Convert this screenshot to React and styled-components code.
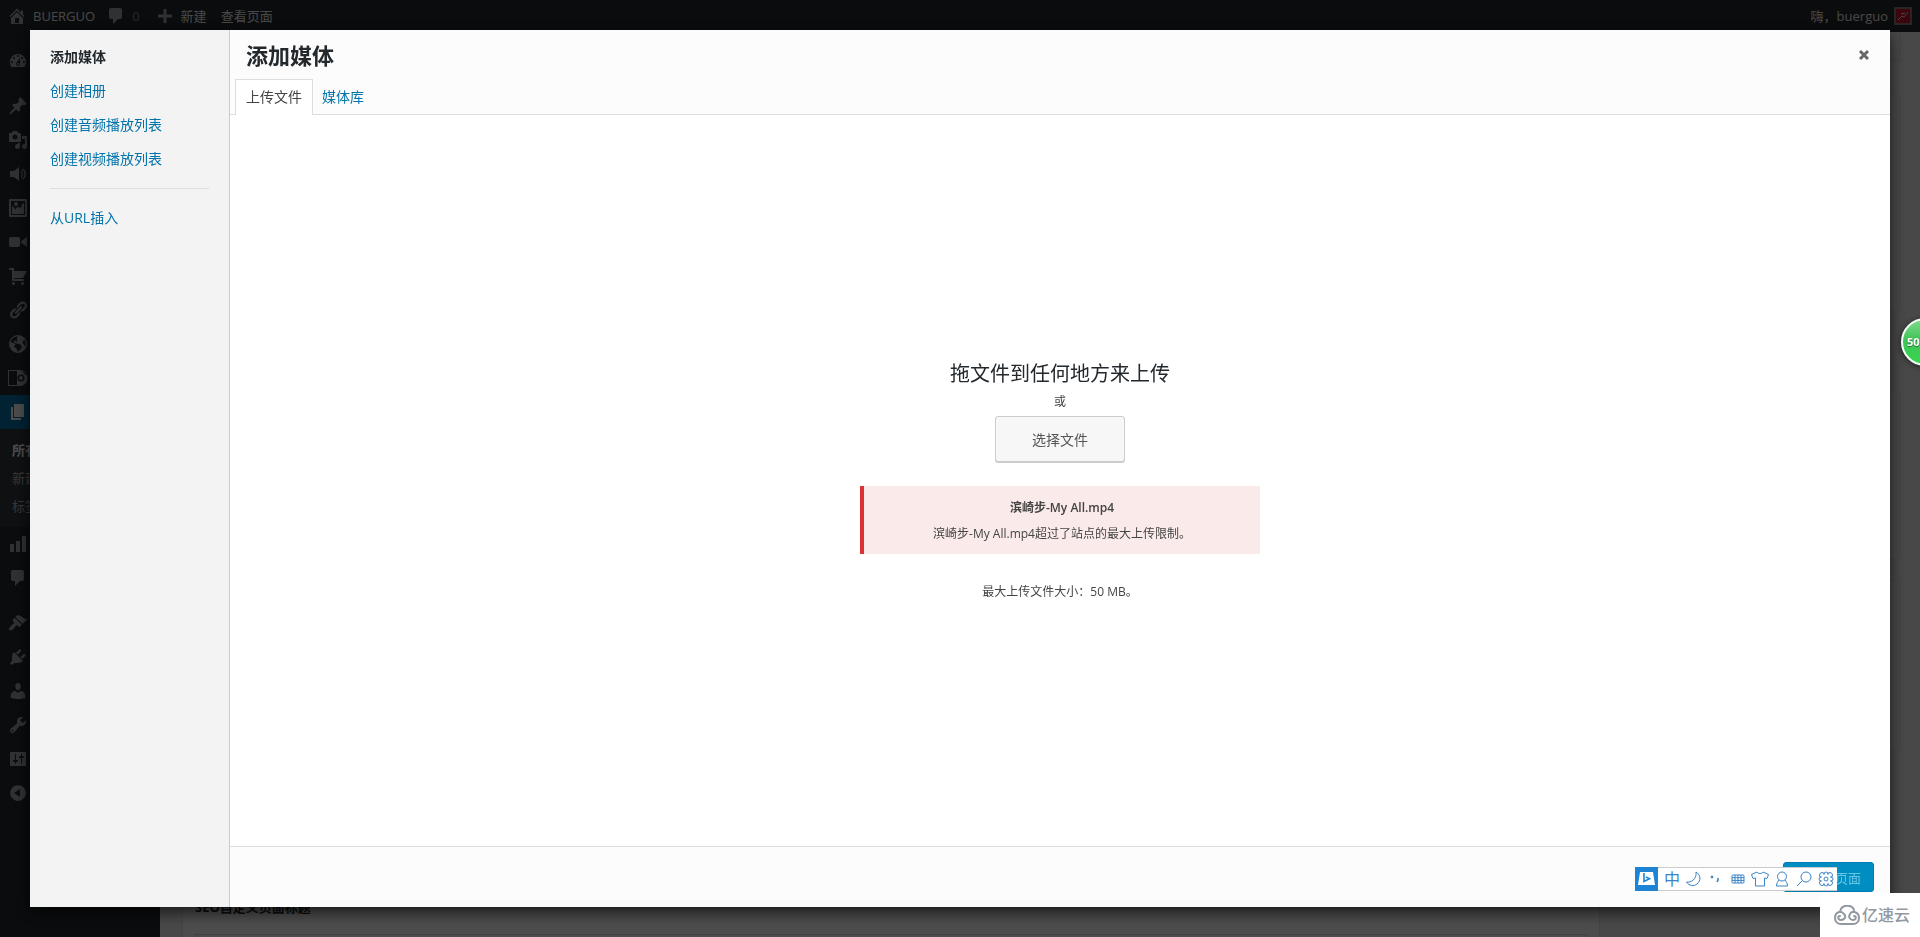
import styled, { createGlobalStyle } from "styled-components"

const icons = {
    home: "M16 8.5l1.53 1.53-1.06 1.06L10 4.6l-6.47 6.49-1.06-1.06L10 2.5l4 4v-2h2v4zm-6-2.46l6 5.99V18H4v-5.97zM12 17v-5H8v5h4z",
    comment: "M5 2h9q.82 0 1.41.59T16 4v7q0 .82-.59 1.41T14 13h-2l-5 5v-5H5q-.82 0-1.41-.59T3 11V4q0-.82.59-1.41T5 2z",
    plus: "M17 8.5v3h-5.500v5.500h-3v-5.500H3v-3h5.500V3h3v5.500z",
    dashboard: "M3.76 16h12.48c1.1-1.37 1.76-3.11 1.76-5 0-4.42-3.58-8-8-8s-8 3.58-8 8c0 1.89.66 3.63 1.76 5zM10 4c.55 0 1 .45 1 1s-.45 1-1 1-1-.45-1-1 .45-1 1-1zM6 6c.55 0 1 .45 1 1s-.45 1-1 1-1-.45-1-1 .45-1 1-1zm8 0c.55 0 1 .45 1 1s-.45 1-1 1-1-.45-1-1 .45-1 1-1zm-5.37 5.55L12 7v6c0 1.1-.9 2-2 2s-2-.9-2-2c0-.57.24-1.08.63-1.45zM4 10c.55 0 1 .45 1 1s-.45 1-1 1-1-.45-1-1 .45-1 1-1zm12 0c.55 0 1 .45 1 1s-.45 1-1 1-1-.45-1-1 .45-1 1-1zm-5 3c0-.55-.45-1-1-1s-1 .45-1 1 .45 1 1 1 1-.45 1-1z",
    pin: "M10.44 3.02l1.82-1.82 6.36 6.35-1.83 1.82c-1.05-.68-2.48-.57-3.41.36l-.75.75c-.92.93-1.04 2.35-.35 3.41l-1.83 1.82-2.41-2.41-2.8 2.79c-.42.42-3.38 2.71-3.8 2.29s1.86-3.39 2.28-3.81l2.79-2.79L4.1 9.36l1.83-1.82c1.05.69 2.48.57 3.4-.36l.75-.75c.93-.92 1.05-2.35.36-3.41z",
    media: "M13 11V4c0-.55-.45-1-1-1h-1.67L9 1H5L3.67 3H2c-.55 0-1 .45-1 1v7c0 .55.45 1 1 1h10c.55 0 1-.45 1-1zM7 4.500c1.38 0 2.500 1.12 2.500 2.500S8.38 9.500 7 9.500 4.500 8.38 4.500 7 5.62 4.500 7 4.500zM14 6h5v10.500c0 1.38-1.12 2.500-2.500 2.500S14 17.88 14 16.500s1.12-2.500 2.500-2.500c.17 0 .34.02.5.05V9h-3V6zm-4 8.05V13h2v3.500c0 1.38-1.12 2.500-2.500 2.500S7 17.88 7 16.500 8.12 14 9.500 14c.17 0 .34.02.5.05z",
    volume: "M2 7h4l5-4v14l-5-4H2V7zM13 6.200c2.200 1.400 2.200 6.200 0 7.600v-1.500c1-1.200 1-3.400 0-4.600zM14.700 4.500C19 6.500 19 13.500 14.700 15.500l-.5-1c3.200-1.800 3.200-7.200 0-9z",
    image: "M2.25 1h15.5c.69 0 1.25.56 1.25 1.25v15.5c0 .69-.56 1.25-1.25 1.25H2.25C1.56 19 1 18.44 1 17.75V2.25C1 1.56 1.56 1 2.25 1zM17 17V3H3v14h14zM10 6c0-1.1-.9-2-2-2s-2 .9-2 2 .9 2 2 2 2-.9 2-2zm3 5s0-6 3-6v10c0 .55-.45 1-1 1H5c-.55 0-1-.45-1-1V8c2 0 3 4 3 4s1-3 3-3 3 2 3 2z",
    video: "M12 13V7c0-1.1-.9-2-2-2H3c-1.1 0-2 .9-2 2v6c0 1.1.9 2 2 2h7c1.1 0 2-.9 2-2zm1-2.500l6 4.500V5l-6 4.500v1z",
    cart: "M6 13h9c.55 0 1 .45 1 1s-.45 1-1 1H5c-.55 0-1-.45-1-1V4H2c-.55 0-1-.45-1-1s.45-1 1-1h3c.55 0 1 .45 1 1v2h13l-4 7H6v1zm-.5 3c.83 0 1.500.67 1.500 1.500S6.33 19 5.500 19 4 18.330 4 17.500 4.670 16 5.500 16zm9 0c.83 0 1.500.67 1.500 1.500s-.67 1.500-1.500 1.500-1.500-.67-1.500-1.500.67-1.500 1.500-1.500z",
    link: "M17.74 2.76c1.68 1.69 1.68 4.41 0 6.1l-1.53 1.52c-1.12 1.12-2.7 1.47-4.14 1.09l2.62-2.61.76-.77.76-.76c.84-.84.84-2.2 0-3.04-.84-.85-2.2-.85-3.04 0l-.77.76-3.38 3.38c-.37-1.44-.02-3.02 1.1-4.14l1.52-1.53c1.69-1.68 4.42-1.68 6.1 0zM8.59 13.43l5.34-5.34c.42-.42.42-1.1 0-1.52-.44-.43-1.13-.39-1.53 0l-5.33 5.34c-.42.42-.42 1.1 0 1.52.44.43 1.13.39 1.52 0zm-.76 2.29l4.14-4.15c.38 1.44.03 3.02-1.09 4.14l-1.52 1.53c-1.69 1.68-4.41 1.68-6.1 0-1.68-1.68-1.68-4.42 0-6.1l1.53-1.52c1.12-1.12 2.7-1.47 4.14-1.1l-4.14 4.15c-.85.84-.85 2.2 0 3.05.84.84 2.2.84 3.04 0z",
    globe: "M10 1a9 9 0 1 0 0 18 9 9 0 0 0 0-18zm3.460 11.950c0 1.470-.8 3.300-4.060 4.700.3-4.170-2.520-3.690-3.200-5 .126-1.100.804-2.063 1.800-2.550-1.552-.266-3-.96-4.180-2 .05.470.28.904.64 1.210-.782-.295-1.458-.817-1.940-1.500.977-3.225 3.883-5.482 7.250-5.630-.84 1.380-1.500 4.130 0 5.570C8.230 8 7.260 6 6.410 6.790c-1.130 1.060.33 2.510 3.420 3.080 3.290.59 3.660 1.580 3.630 3.080zm1.340-4c-.32-1.110.62-2.230 1.690-3.140 1.356 1.955 1.670 4.450.84 6.680-.77-1.890-2.170-2.320-2.530-3.570z",
    ads: "M0 2h12c10 0 10 16 0 16H0V2zm1 1v14h8V3H1zm12 3.500a3.500 3.500 0 1 0 0 7 3.500 3.500 0 0 0 0-7zm0 1.500a2 2 0 1 1 0 4 2 2 0 0 1 0-4zM14.500 3l1.500 3 3 1.500-2-3z",
    page: "M6 15V2h10v13H6zm-1 1h8v2H3V5h2v11z",
    chart: "M18 18V2h-4v16h4zm-6 0V7H8v11h4zm-6 0v-8H2v8h4z",
    brush: "M14.48 11.06L7.41 3.99l1.5-1.5c.5-.56 2.3-.47 3.51.32 1.21.8 1.43 1.28 2.91 2.1 1.18.64 2.45 1.26 4.45.85zm-.71.71L6.7 4.7 4.93 6.47c-.39.39-.39 1.02 0 1.41l1.06 1.06c.39.39.39 1.03 0 1.42-.6.6-1.43 1.11-2.21 1.69-.35.26-.7.53-1.01.84C1.43 14.23.4 16.08 1.4 17.07c.99 1 2.840-.03 4.180-1.360.31-.31.58-.66.85-1.020.57-.78 1.080-1.610 1.690-2.210.39-.39 1.020-.39 1.410 0l1.060 1.060c.39.39 1.020.39 1.410 0z",
    plug: "M13.11 4.36L9.87 7.6 8 5.73l3.24-3.24c.35-.34 1.05-.2 1.56.32.52.51.66 1.21.31 1.55zm-8 1.77l.91-1.12 9.01 9.01-1.19.84c-.71.71-2.63 1.16-3.82 1.16H6.14L4.9 17.26c-.59.59-1.54.59-2.12 0-.59-.58-.59-1.53 0-2.12l1.24-1.24v-3.88c0-1.13.4-3.19 1.09-3.89zm7.26 3.97l3.24-3.24c.34-.35 1.04-.21 1.55.31.52.51.66 1.21.31 1.55l-3.24 3.25z",
    user: "M10 9.25c-2.27 0-2.73-3.44-2.73-3.44C7 4.02 7.82 2 9.97 2c2.16 0 2.98 2.02 2.71 3.81 0 0-.41 3.44-2.68 3.44zm0 2.57L12.72 10c2.39 0 4.52 2.33 4.52 4.53v2.49s-3.65 1.13-7.24 1.13c-3.65 0-7.24-1.13-7.24-1.13v-2.49c0-2.25 1.94-4.48 4.47-4.48z",
    wrench: "M16.68 9.77c-1.34 1.34-3.3 1.67-4.95.99l-5.41 6.52c-.99.99-2.59.99-3.58 0s-.99-2.59 0-3.57l6.52-5.42c-.68-1.65-.35-3.61.99-4.95 1.28-1.28 3.12-1.62 4.72-1.06l-2.89 2.89 2.82 2.82 2.86-2.87c.53 1.58.18 3.39-1.08 4.65zM3.81 16.21c.4.39 1.04.39 1.43 0 .4-.4.4-1.04 0-1.43-.39-.4-1.03-.4-1.43 0-.39.39-.39 1.03 0 1.43z",
    settings: "M18 16V4c0-.55-.45-1-1-1H3c-.55 0-1 .45-1 1v12c0 .55.45 1 1 1h14c.55 0 1-.45 1-1zM8 11h1c.55 0 1 .45 1 1s-.45 1-1 1H8v1.500c0 .28-.22.500-.5.500s-.5-.22-.5-.5V13H6c-.55 0-1-.45-1-1s.45-1 1-1h1V5.500c0-.28.22-.5.500-.5s.500.22.500.500V11zm5-2h-1c-.55 0-1-.45-1-1s.45-1 1-1h1V5.500c0-.28.22-.5.500-.5s.500.22.500.500V7h1c.55 0 1 .45 1 1s-.45 1-1 1h-1v5.500c0 .28-.22.500-.5.500s-.5-.22-.5-.5V9z",
    collapse: "M10 2.16c4.33 0 7.84 3.51 7.84 7.84s-3.51 7.84-7.84 7.84S2.16 14.33 2.16 10 5.71 2.16 10 2.16zm2 11.72V6.12L6.18 9.97z",
}

const Dashicon = ({ name }) => (
    <Glyph viewBox="0 0 20 20" aria-hidden="true">
        <path fillRule="evenodd" d={icons[name]} />
    </Glyph>
)

const menuTop = ["dashboard"]
const menuContent = ["pin", "media", "volume", "image", "video", "cart", "link", "globe", "ads"]
const menuAfterPages = ["chart", "comment"]
const menuTools = ["brush", "plug", "user", "wrench", "settings", "collapse"]

const MenuGroup = ({ items }) => items.map((name) => (
    <MenuItem key={name} href="#" aria-label={name}><Dashicon name={name} /></MenuItem>
))

const ImeBar = () => (
    <ImeWrap>
        <ImeLogo viewBox="0 0 23 24" aria-hidden="true">
            <rect width="23" height="24" fill="#1d83d4" />
            <path d="M5 5h13l2 13H3z" fill="#fff" />
            <path d="M9 6v8.500l5.500-2.700-3.500-1.800" fill="none" stroke="#1d83d4" strokeWidth="1.600" />
        </ImeLogo>
        <ImeButton aria-label="中英文切换">中</ImeButton>
        <ImeButton aria-label="全半角">
            <ImeIcon viewBox="0 0 18 18"><path d="M11 2c5 3 5 9 1 12-3 2.500-8 2-10.500-2C6 13 12 9 11 2z" /></ImeIcon>
        </ImeButton>
        <ImeButton aria-label="标点">
            <ImeIcon viewBox="0 0 18 18"><circle cx="5" cy="7" r="1" fill="#3a83c5" /><path d="M11 8v2l-1 2M10.500 8.500h.5" strokeWidth="1.600" /></ImeIcon>
        </ImeButton>
        <ImeButton aria-label="键盘">
            <ImeIcon viewBox="0 0 18 18"><rect x="3" y="5" width="12" height="8" rx="1" /><path d="M3 7.700h12M3 10.400h12M6 5v8M9 5v8M12 5v8" /></ImeIcon>
        </ImeButton>
        <ImeButton aria-label="皮肤">
            <ImeIcon viewBox="0 0 18 18"><path d="M6 2c1 2 5 2 6 0l5.500 2.500-1.500 4-2.500-.5v8h-9V8L2 8.500.5 4.500z" /></ImeIcon>
        </ImeButton>
        <ImeButton aria-label="账户">
            <ImeIcon viewBox="0 0 18 18"><circle cx="9" cy="6.500" r="4.500" /><path d="M6 10c-1 1.500-2.500 3-2.500 6h11c0-3-1.500-4.500-2.500-6" /></ImeIcon>
        </ImeButton>
        <ImeButton aria-label="搜索">
            <ImeIcon viewBox="0 0 18 18"><circle cx="11" cy="7" r="5" /><path d="M7.500 10.500L2 16" /></ImeIcon>
        </ImeButton>
        <ImeButton aria-label="设置">
            <ImeIcon viewBox="0 0 18 18">
                <path d="M7 4.500a2 2.500 0 1 1 4 0a2.500 2 45 1 1 2.500 2.500a2.500 2 0 1 1 0 4a2 2.500 45 1 1-2.500 2.500a2 2.500 0 1 1-4 0a2.500 2 45 1 1-2.500-2.500a2.500 2 0 1 1 0-4a2 2.500 45 1 1 2.500-2.500z" />
                <circle cx="9" cy="9" r="2" />
            </ImeIcon>
        </ImeButton>
    </ImeWrap>
)

const App = () => {
    return (
        <Page>
            <GlobalStyle />
            <AdminBar>
                <BarLink href="#"><Dashicon name="home" />BUERGUO</BarLink>
                <BarLink href="#" $dim><Dashicon name="comment" />0</BarLink>
                <BarLink href="#"><Dashicon name="plus" />新建</BarLink>
                <BarLink href="#" $plain>查看页面</BarLink>
                <Account href="#">
                    嗨，buerguo
                    <Avatar viewBox="0 0 18 18" aria-hidden="true">
                        <rect x="1" y="1" width="16" height="16" fill="#c8102e" stroke="#999" strokeWidth="1.500" />
                        <path d="M4 13l4-4 2 1 4-5M7 7l4-1" stroke="#eee" fill="none" />
                    </Avatar>
                </Account>
            </AdminBar>
            <Body>
                <AdminMenu>
                    <MenuGroup items={menuTop} />
                    <MenuGap />
                    <MenuGroup items={menuContent} />
                    <MenuItem href="#" $current aria-label="pages"><Dashicon name="page" /></MenuItem>
                    <SubMenu>
                        <SubLink href="#" $current>所有页面</SubLink>
                        <SubLink href="#">新建页面</SubLink>
                        <SubLink href="#">标签</SubLink>
                    </SubMenu>
                    <MenuGroup items={menuAfterPages} />
                    <MenuGap />
                    <MenuGroup items={menuTools} />
                </AdminMenu>
                <Editor>
                    <Column>
                        <EditorSpace />
                        <SeoBox>
                            <SeoLabel htmlFor="seo-title">SEO自定义页面标题</SeoLabel>
                            <SeoInput id="seo-title" />
                        </SeoBox>
                    </Column>
                    <Column>
                        <HelpTab />
                        <SideBox $tall />
                        <SideBox />
                        <SideBox />
                    </Column>
                </Editor>
            </Body>

            <Backdrop />
            <Modal role="dialog" aria-label="添加媒体">
                <Sidebar>
                    <SideLink href="#" $active>添加媒体</SideLink>
                    <SideLink href="#">创建相册</SideLink>
                    <SideLink href="#">创建音频播放列表</SideLink>
                    <SideLink href="#">创建视频播放列表</SideLink>
                    <Divider />
                    <SideLink href="#">从URL插入</SideLink>
                </Sidebar>
                <Main>
                    <TitleRow>
                        <Title>添加媒体</Title>
                        <Close aria-label="关闭">
                            <svg width="12" height="12" viewBox="0 0 12 12" aria-hidden="true">
                                <path d="M2 2l8 8M10 2l-8 8" stroke="#666" strokeWidth="3" />
                            </svg>
                        </Close>
                    </TitleRow>
                    <Tabs>
                        <Tab $active>上传文件</Tab>
                        <Tab>媒体库</Tab>
                    </Tabs>
                    <Uploader>
                        <DropTitle>拖文件到任何地方来上传</DropTitle>
                        <Or>或</Or>
                        <SelectButton>选择文件</SelectButton>
                        <UploadError>
                            <FileName>滨崎步-My All.mp4</FileName>
                            <span>滨崎步-My All.mp4超过了站点的最大上传限制。</span>
                        </UploadError>
                        <MaxSize>最大上传文件大小：50 MB。</MaxSize>
                    </Uploader>
                    <Footer>
                        <InsertButton disabled>插入至页面</InsertButton>
                    </Footer>
                </Main>
            </Modal>

            <ImeBar />
            <SpeedBall>50</SpeedBall>
            <Watermark>
                <svg width="26" height="20" viewBox="0 0 26 20" fill="none" stroke="#9298a0" strokeWidth="2" strokeLinecap="round" aria-hidden="true">
                    <path d="M6 7C7-1 18-1 20 5M10 9C7 5 1 7 1 13c0 4 3 6 6 6h12c4 0 6-3 6-6 0-6-7-8-9-4-2 3 0 6 3 6s4-4 1-4M10 9c3 3 0 6-3 6s-4-4-1-4" />
                </svg>
                亿速云
            </Watermark>
        </Page>
    )
}

export default App

const GlobalStyle = createGlobalStyle `
    * {
        box-sizing:border-box;
    }
    body {
        margin:0;
        overflow:hidden;
        background:#f1f1f1;
        color:#444;
        font:13px/18px "Open Sans", "Noto Sans CJK SC", sans-serif;
    }
    a {
        text-decoration:none;
    }
    button {
        font-family:inherit;
        cursor:pointer;
    }
`

const Page = styled.div `
    display:flex;
    flex-direction:column;
    height:100vh;
`

const Glyph = styled.svg `
    width:20px;
    height:20px;
    flex:none;
    fill:currentColor;
`

const AdminBar = styled.header `
    display:flex;
    align-items:center;
    flex:none;
    height:32px;
    padding:0 8px;
    gap:12px;
    background:#23282d;
`

const BarLink = styled.a `
    display:flex;
    align-items:center;
    gap:6px;
    margin-left:${(props) => (props.$plain ? 2 : -1)}px;
    padding-right:${(props) => (props.$dim ? 4 : 0)}px;
    color:${(props) => (props.$dim ? "#888" : "#eee")};
    svg {
        color:#a0a5aa;
    }
`

const Account = styled(BarLink) `
    margin-left:auto;
`

const Avatar = styled.svg `
    width:18px;
    height:18px;
`

const Body = styled.div `
    display:flex;
    flex:1;
    min-height:0;
`

const AdminMenu = styled.nav `
    width:160px;
    flex:none;
    padding-top:12px;
    background:#23282d;
`

const MenuItem = styled.a `
    display:flex;
    align-items:center;
    height:34px;
    padding-left:8px;
    color:${(props) => (props.$current ? "#fff" : "#a0a5aa")};
    background:${(props) => (props.$current ? "#0073aa" : "transparent")};
`

const MenuGap = styled.div `
    height:11px;
`

const SubMenu = styled.div `
    padding:7px 0;
    background:#32373c;
`

const SubLink = styled.a `
    display:block;
    padding:5px 12px;
    color:${(props) => (props.$current ? "#fff" : "#b4b9be")};
    font-weight:${(props) => (props.$current ? 600 : 400)};
`

const Editor = styled.main `
    display:grid;
    grid-template-columns:1fr 280px;
    gap:20px;
    flex:1;
    padding:0 20px 0 22px;
`

const Column = styled.div `
    display:flex;
    flex-direction:column;
`

const EditorSpace = styled.div `
    flex:1;
`

const SeoBox = styled.section `
    padding:0 12px;
    background:#fff;
    border:1px solid #e5e5e5;
    border-width:0 1px;
`

const SeoLabel = styled.label `
    display:block;
    padding:8px 0 18px;
    color:#23282d;
    font-size:13px;
    font-weight:700;
`

const SeoInput = styled.input `
    display:block;
    width:100%;
    height:3px;
    border:1px solid #ddd;
    border-bottom:0;
    background:#fff;
`

const HelpTab = styled.div `
    height:29px;
    margin-bottom:34px;
    border:1px solid #ddd;
    border-top:0;
`

const SideBox = styled.section `
    height:${(props) => (props.$tall ? 216 : 169)}px;
    margin-bottom:${(props) => (props.$tall ? 80 : 20)}px;
    border:1px solid #e5e5e5;
    background:#f4f4f4;
`

const Backdrop = styled.div `
    position:fixed;
    inset:0;
    background:rgba(0,0,0,.7);
`

const Modal = styled.div `
    position:fixed;
    inset:30px;
    display:flex;
    background:#fcfcfc;
    box-shadow:0 5px 15px rgba(0,0,0,.7);
`

const Sidebar = styled.nav `
    width:200px;
    flex:none;
    padding-top:10px;
    background:#f3f3f3;
    border-right:1px solid #ccc;
`

const SideLink = styled.a `
    display:block;
    padding:8px 20px;
    font-size:14px;
    color:${(props) => (props.$active ? "#23282d" : "#0073aa")};
    font-weight:${(props) => (props.$active ? 600 : 400)};
`

const Divider = styled.hr `
    margin:12px 20px;
    border:0;
    border-top:1px solid #ddd;
`

const Main = styled.section `
    display:flex;
    flex-direction:column;
    flex:1;
    min-width:0;
`

const TitleRow = styled.div `
    display:flex;
    align-items:center;
    justify-content:space-between;
    height:49px;
    padding:0 16px;
`

const Title = styled.h1 `
    margin:0;
    color:#23282d;
    font-size:22px;
    line-height:50px;
`

const Close = styled.button `
    display:flex;
    padding:5px 4px 4px;
    border:0;
    background:none;
`

const Tabs = styled.div `
    display:flex;
    padding:0 5px;
    border-bottom:1px solid #ddd;
`

const Tab = styled.button `
    margin-bottom:-1px;
    padding:8px ${(props) => (props.$active ? 10 : 8)}px 9px;
    border:1px solid ${(props) => (props.$active ? "#ddd" : "transparent")};
    border-bottom:0;
    background:${(props) => (props.$active ? "#fff" : "none")};
    color:${(props) => (props.$active ? "#444" : "#0073aa")};
    font-size:14px;
    line-height:18px;
`

const Uploader = styled.div `
    display:flex;
    flex-direction:column;
    align-items:center;
    justify-content:center;
    flex:1;
    background:#fff;
    font-size:12px;
`

const DropTitle = styled.h2 `
    margin:0 0 5px;
    color:#23282d;
    font-size:20px;
    font-weight:400;
    line-height:28px;
`

const Or = styled.p `
    margin:0 0 5px;
`

const SelectButton = styled.button `
    height:46px;
    padding:0 36px;
    border:1px solid #ccc;
    border-radius:3px;
    background:#f7f7f7;
    box-shadow:0 1px 0 #ccc;
    color:#555;
    font-size:14px;
`

const UploadError = styled.div `
    display:flex;
    flex-direction:column;
    gap:8px;
    width:400px;
    margin:24px 0 28px;
    padding:13px 8px 11px;
    border-left:4px solid #dc3232;
    background:#fbeaea;
    text-align:center;
`

const FileName = styled.strong `
    font-weight:600;
`

const MaxSize = styled.p `
    margin:0;
    line-height:20px;
`

const Footer = styled.footer `
    display:flex;
    align-items:center;
    justify-content:flex-end;
    height:61px;
    padding:0 16px;
    border-top:1px solid #ddd;
`

const InsertButton = styled.button `
    height:30px;
    padding:0 12px;
    border:1px solid #007cb2;
    border-radius:3px;
    background:#008ec2;
    color:#66c6e4;
    font-size:13px;
`

const ImeWrap = styled.div `
    position:fixed;
    right:83px;
    bottom:46px;
    display:flex;
    height:24px;
    border:1px solid #ccc;
    border-width:1px 0;
    background:#fff;
`

const ImeLogo = styled.svg `
    width:23px;
    height:24px;
    margin:-1px 3px -1px 0;
`

const ImeButton = styled.button `
    display:flex;
    align-items:center;
    justify-content:center;
    width:22px;
    padding:0;
    border:0;
    background:none;
    color:#3a83c5;
    font-size:16px;
    line-height:22px;
`

const ImeIcon = styled.svg `
    width:18px;
    height:18px;
    fill:none;
    stroke:#3a83c5;
`

const SpeedBall = styled.div `
    position:fixed;
    top:318px;
    right:-29px;
    width:48px;
    height:48px;
    padding-left:4px;
    border:2px solid #f2fff4;
    border-radius:50%;
    background:linear-gradient(#7fdc8b, #3fc456 45%, #35d751);
    box-shadow:0 1px 6px rgba(0,0,0,.6);
    color:#fff;
    font-size:11px;
    font-weight:700;
    line-height:44px;
    text-shadow:0 1px 1px #23733a;
`

const Watermark = styled.div `
    position:fixed;
    right:0;
    bottom:0;
    display:flex;
    align-items:center;
    gap:2px;
    width:100px;
    height:44px;
    padding-left:14px;
    background:#fff;
    color:#9298a0;
    font-size:16px;
    font-weight:500;
`
